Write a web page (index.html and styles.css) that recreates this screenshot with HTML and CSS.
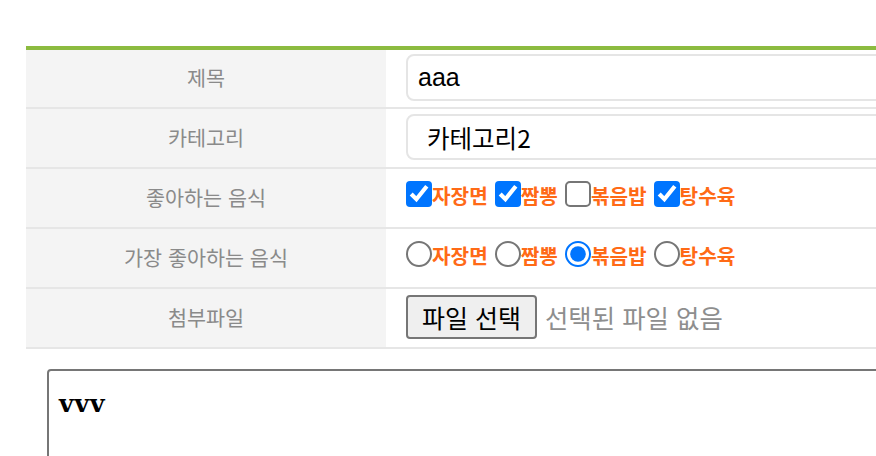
FILE: index.html
```html
<!DOCTYPE html>
<html lang="ko">
<head>
<meta charset="utf-8">
<title>글쓰기</title>
<link rel="stylesheet" href="styles.css">
</head>
<body>
<div class="page">
  <table class="form">
    <tr>
      <th>제목</th>
      <td><div class="cell cell-input"><input class="text" type="text" value="aaa"></div></td>
    </tr>
    <tr>
      <th>카테고리</th>
      <td><div class="cell cell-select"><select class="sel"><option>카테고리2</option></select></div></td>
    </tr>
    <tr>
      <th>좋아하는 음식</th>
      <td>
        <div class="cell cell-choice">
          <label class="opt"><input type="checkbox" checked><span>자장면</span></label>
          <label class="opt"><input type="checkbox" checked><span>짬뽕</span></label>
          <label class="opt"><input type="checkbox"><span>볶음밥</span></label>
          <label class="opt"><input type="checkbox" checked><span>탕수육</span></label>
        </div>
      </td>
    </tr>
    <tr>
      <th>가장 좋아하는 음식</th>
      <td>
        <div class="cell cell-choice">
          <label class="opt"><input type="radio" name="best"><span>자장면</span></label>
          <label class="opt"><input type="radio" name="best"><span>짬뽕</span></label>
          <label class="opt"><input type="radio" name="best" checked><span>볶음밥</span></label>
          <label class="opt"><input type="radio" name="best"><span>탕수육</span></label>
        </div>
      </td>
    </tr>
    <tr>
      <th>첨부파일</th>
      <td>
        <div class="cell cell-file">
          <span class="file-btn">파일 선택</span>
          <span class="file-name">선택된 파일 없음</span>
        </div>
      </td>
    </tr>
  </table>
  <div class="editor">
    <textarea class="area" readonly>vvv</textarea>
  </div>
</div>
</body>
</html>
```
FILE: styles.css
```css
html, body {
  margin: 0;
  padding: 0;
  overflow: hidden;
  background: #ffffff;
}

body {
  font-family: "Noto Sans CJK KR", "Noto Sans", sans-serif;
}

.page {
  width: 1200px;
  padding: 46px 0 0 26px;
}

.form {
  width: 1100px;
  border-collapse: collapse;
  border-top: 4px solid #8cbb40;
}

.form th {
  box-sizing: border-box;
  width: 360px;
  height: 60px;
  padding: 0 0 3px;
  background: #f4f4f4;
  color: #8a8a8a;
  font-size: 20.7px;
  font-weight: normal;
  text-align: center;
  vertical-align: middle;
  border-bottom: 2px solid #e6e6e6;
}

.form td {
  box-sizing: border-box;
  height: 60px;
  padding: 0 20px;
  vertical-align: top;
  border-bottom: 2px solid #e6e6e6;
}

.cell {
  display: flex;
  align-items: center;
}

.cell-input { padding-top: 4px; }
.cell-select { padding-top: 5px; }
.cell-choice { padding-top: 12px; gap: 7px; }
.cell-file { padding-top: 6px; gap: 8px; }

.text, .sel {
  box-sizing: border-box;
  width: 100%;
  height: 47px;
  border: 2px solid #e5e5e5;
  border-radius: 8px;
  background: #fff;
  color: #000;
  outline: none;
  margin: 0;
}

.text {
  padding: 0 10px;
  font-family: "Liberation Sans", Arial, sans-serif;
  font-size: 25px;
}

.sel {
  height: 46px;
  appearance: none;
  -webkit-appearance: none;
  padding: 0 19px;
  font-family: "Noto Sans CJK KR", sans-serif;
  font-size: 24.5px;
}

.opt {
  display: flex;
  align-items: center;
  color: #ff6a16;
  font-size: 20.2px;
  font-weight: bold;
  line-height: 26px;
}

.opt input {
  zoom: 2;
  width: 13px;
  height: 13px;
  margin: 0;
}

.opt span {
  position: relative;
  top: 2px;
}

.file-btn {
  box-sizing: border-box;
  display: inline-flex;
  align-items: center;
  justify-content: center;
  width: 131px;
  height: 44px;
  border: 2px solid #767676;
  border-radius: 4px;
  background: #efefef;
  color: #000;
  font-size: 25px;
}

.file-name {
  color: #8e8e8e;
  font-size: 25.4px;
}

.editor {
  padding: 20px 0 0 21px;
}

.area {
  box-sizing: border-box;
  display: block;
  width: 1000px;
  height: 200px;
  margin: 0;
  padding: 18px 10px;
  border: 2px solid #767676;
  border-radius: 4px;
  resize: none;
  outline: none;
  font-family: "DejaVu Serif", "Liberation Serif", serif;
  font-weight: bold;
  font-size: 25px;
  letter-spacing: 1px;
  color: #000;
}
```
